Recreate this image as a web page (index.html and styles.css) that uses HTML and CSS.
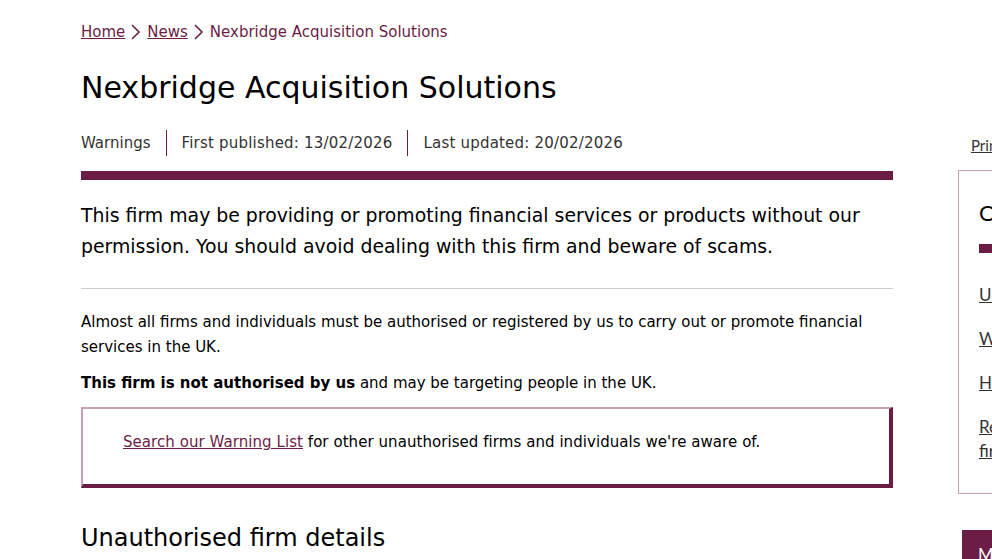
FILE: index.html
```html
<!DOCTYPE html>
<html lang="en">
<head>
<meta charset="utf-8">
<title>Nexbridge Acquisition Solutions</title>
<link rel="stylesheet" href="styles.css">
</head>
<body>
<div class="page">
  <nav class="crumbs">
    <a href="#">Home</a>
    <svg class="chev" width="14" height="18" viewBox="0 0 14 18"><path d="M3 2 L10 9 L3 16" fill="none" stroke="#6c1d45" stroke-width="1.6"/></svg>
    <a href="#">News</a>
    <svg class="chev" width="14" height="18" viewBox="0 0 14 18"><path d="M3 2 L10 9 L3 16" fill="none" stroke="#6c1d45" stroke-width="1.6"/></svg>
    <span>Nexbridge Acquisition Solutions</span>
  </nav>
  <h1 class="title">Nexbridge Acquisition Solutions</h1>
  <div class="layout">
    <main class="main">
      <div class="meta">
        <span class="meta-item">Warnings</span>
        <span class="meta-item">First published: 13/02/2026</span>
        <span class="meta-item">Last updated: 20/02/2026</span>
      </div>
      <div class="bar"></div>
      <p class="lead">This firm may be providing or promoting financial services or products without our permission. You should avoid dealing with this firm and beware of scams.</p>
      <hr class="rule">
      <p class="body">Almost all firms and individuals must be authorised or registered by us to carry out or promote financial services in the UK.</p>
      <p class="body"><strong>This firm is not authorised by us</strong> and may be targeting people in the UK.</p>
      <div class="callout">
        <p><a href="#">Search our Warning List</a> for other unauthorised firms and individuals we're aware of.</p>
      </div>
      <h2 class="sub">Unauthorised firm details</h2>
    </main>
    <aside class="side">
      <a class="print" href="#">Print</a>
      <div class="sidebox">
        <h3 class="side-title">On this page</h3>
        <div class="side-bar"></div>
        <ul class="side-links">
          <li><a href="#">Unauthorised firm details</a></li>
          <li><a href="#">What to do</a></li>
          <li><a href="#">How to check</a></li>
          <li><a href="#">Report an unauthorised firm</a></li>
        </ul>
      </div>
      <a class="side-btn" href="#">More warnings</a>
    </aside>
  </div>
</div>
</body>
</html>
```

FILE: styles.css
```css
html, body {
  margin: 0;
  padding: 0;
  overflow: hidden;
  background: #fff;
}
body {
  font-family: "DejaVu Sans", Verdana, sans-serif;
  color: #000;
  width: 992px;
  height: 559px;
}
.page {
  padding: 20px 0 0 81px;
  width: 1300px;
}
.crumbs {
  display: flex;
  align-items: center;
  gap: 4px;
  font-size: 15px;
  color: #6c1d45;
  height: 24px;
}
.crumbs a {
  color: #6c1d45;
  text-decoration: underline;
}
.chev { display: block; }
.title {
  margin: 24px 0 0;
  font-size: 30px;
  font-weight: normal;
  line-height: 40px;
}
.layout {
  display: flex;
  gap: 65px;
  margin-top: 22px;
}
.main {
  width: 812px;
  flex: none;
}
.meta {
  display: flex;
  font-size: 15px;
  color: #333;
  height: 26px;
  align-items: center;
}
.meta-item {
  padding: 0 15px;
  border-left: 1px solid #6c1d45;
  line-height: 26px;
  letter-spacing: 0.2px;
}
.meta-item:first-child {
  padding-left: 0;
  border-left: 0;
  letter-spacing: 0;
}
.bar {
  height: 9px;
  background: #6c1d45;
  margin-top: 15px;
}
.lead {
  font-size: 18.87px;
  line-height: 31px;
  margin: 20px 0 0;
}
.rule {
  border: 0;
  border-top: 1px solid #ccc;
  margin: 26px 0 0;
}
.body {
  font-size: 15px;
  line-height: 25px;
  margin: 21px 0 0;
}
.body + .body { margin-top: 11px; }
.callout {
  margin-top: 11px;
  border-top: 2px solid #c4a0b2;
  border-left: 2px solid #c4a0b2;
  border-right: 4px solid #6c1d45;
  border-bottom: 4px solid #6c1d45;
  padding: 21px 40px 30px;
}
.callout p {
  font-size: 15px;
  line-height: 24px;
  margin: 0;
  letter-spacing: 0.06px;
}
.callout a { color: #6c1d45; }
.sub {
  font-size: 24px;
  font-weight: normal;
  margin: 35px 0 0;
  line-height: 30px;
}
.side {
  width: 300px;
  flex: none;
  font-family: Lato, sans-serif;
}
.print {
  display: block;
  margin-left: 13px;
  margin-top: 5px;
  font-size: 15px;
  color: #333;
  line-height: 20px;
}
.sidebox {
  margin-top: 15px;
  border: 1px solid #c9a5b5;
  padding: 28px 20px 30px;
  height: 264px;
}
.side-title {
  margin: 0;
  font-size: 22px;
  font-weight: normal;
  line-height: 28px;
}
.side-bar {
  width: 60px;
  height: 9px;
  background: #6c1d45;
  margin-top: 17px;
}
.side-links {
  list-style: none;
  margin: 30px 0 0;
  padding: 0;
  font-size: 17px;
  line-height: 24px;
  width: 200px;
}
.side-links li { margin-bottom: 20px; }
.side-links a { color: #333; }
.side-btn {
  display: block;
  margin: 36px 0 0 4px;
  background: #6c1d45;
  color: #fff;
  text-decoration: none;
  font-size: 17px;
  padding: 14px 16px;
  width: 200px;
}
```
